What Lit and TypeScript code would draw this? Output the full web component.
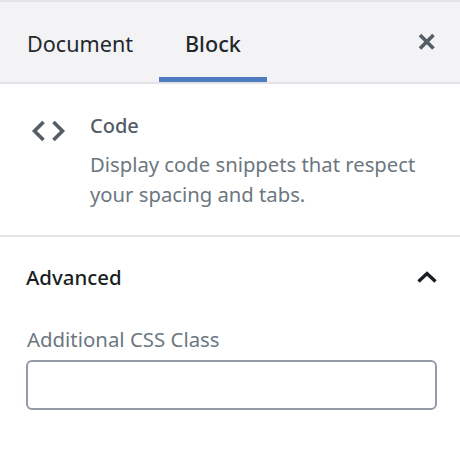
import { LitElement, html, css } from "lit";
import { customElement } from "lit/decorators.js";

@customElement("app-root")
export class AppRoot extends LitElement {
  static styles = css`
    :host { display: block; width: 460px; height: 449px; background: #fff; font-family: "Noto Sans", "Open Sans", sans-serif; overflow: hidden; }
    .tabs { height: 84px; box-sizing: border-box; background: #f3f3f6; border-top: 2px solid #e4e4e8; border-bottom: 2px solid #e4e4e8; display: flex; align-items: stretch; }
    .tab { font-size: 21.6px; line-height: 28px; color: #23282d; padding: 28px 0 0 27px; box-sizing: border-box; width: 159px; }
    .tab.active { font-size: 21.6px; font-weight: 500; width: 108px; padding: 28px 0 0 26px; border-bottom: 5px solid #4f7bc1; height: 80px; }
    .close { margin-left: auto; margin-right: 24px; margin-top: 31px; width: 18px; height: 18px; }
    .close svg, .icon svg, .chev svg { display: block; }
    .info { display: flex; padding: 31px 20px 0 30px; height: 153px; box-sizing: border-box; border-bottom: 2px solid #e4e4e8; }
    .icon { width: 36px; margin-top: 4px; margin-right: 24px; flex: none; }
    .title { font-size: 20px; font-weight: 500; line-height: 24px; color: #555d66; margin-top: -1px; }
    .desc { font-size: 20.25px; line-height: 30px; color: #6c7781; margin-top: 11px; }
    .advanced { padding: 0 23px 0 26px; }
    .head { display: flex; justify-content: space-between; align-items: center; height: 80px; font-size: 20.4px; font-weight: 500; color: #191e23; }
    .label { font-size: 20.4px; line-height: 27px; color: #6c7781; padding-left: 1px; margin-top: 9px; }
    .input { display: block; height: 50px; width: 411px; box-sizing: border-box; border: 2px solid #9499a6; border-radius: 6px; margin-top: 7px; background: #fff; }
  `;
  render() {
    return html`
      <div class="tabs">
        <div class="tab">Document</div>
        <div class="tab active">Block</div>
        <div class="close"><svg width="18" height="18" viewBox="0 0 18 18"><path d="M2 2l13.500 13.500M15.500 2L2 15.500" stroke="#555d66" stroke-width="3.600" fill="none"/></svg></div>
      </div>
      <div class="info">
        <div class="icon"><svg width="36" height="24" viewBox="0 0 36 24"><path d="M13.500 3L4.500 12l9 9M23.500 3L32.500 12l-9 9" stroke="#555d66" stroke-width="3.600" fill="none"/></svg></div>
        <div>
          <div class="title">Code</div>
          <div class="desc">Display code snippets that respect your spacing and tabs.</div>
        </div>
      </div>
      <div class="advanced">
        <div class="head"><span>Advanced</span><span class="chev"><svg width="20" height="12" viewBox="0 0 20 12"><path d="M1.500 10.500L10 2.500l8.500 8" stroke="#191e23" stroke-width="3.400" fill="none"/></svg></span></div>
        <div class="label">Additional CSS Class</div>
        <input class="input" />
      </div>
    `;
  }
}
